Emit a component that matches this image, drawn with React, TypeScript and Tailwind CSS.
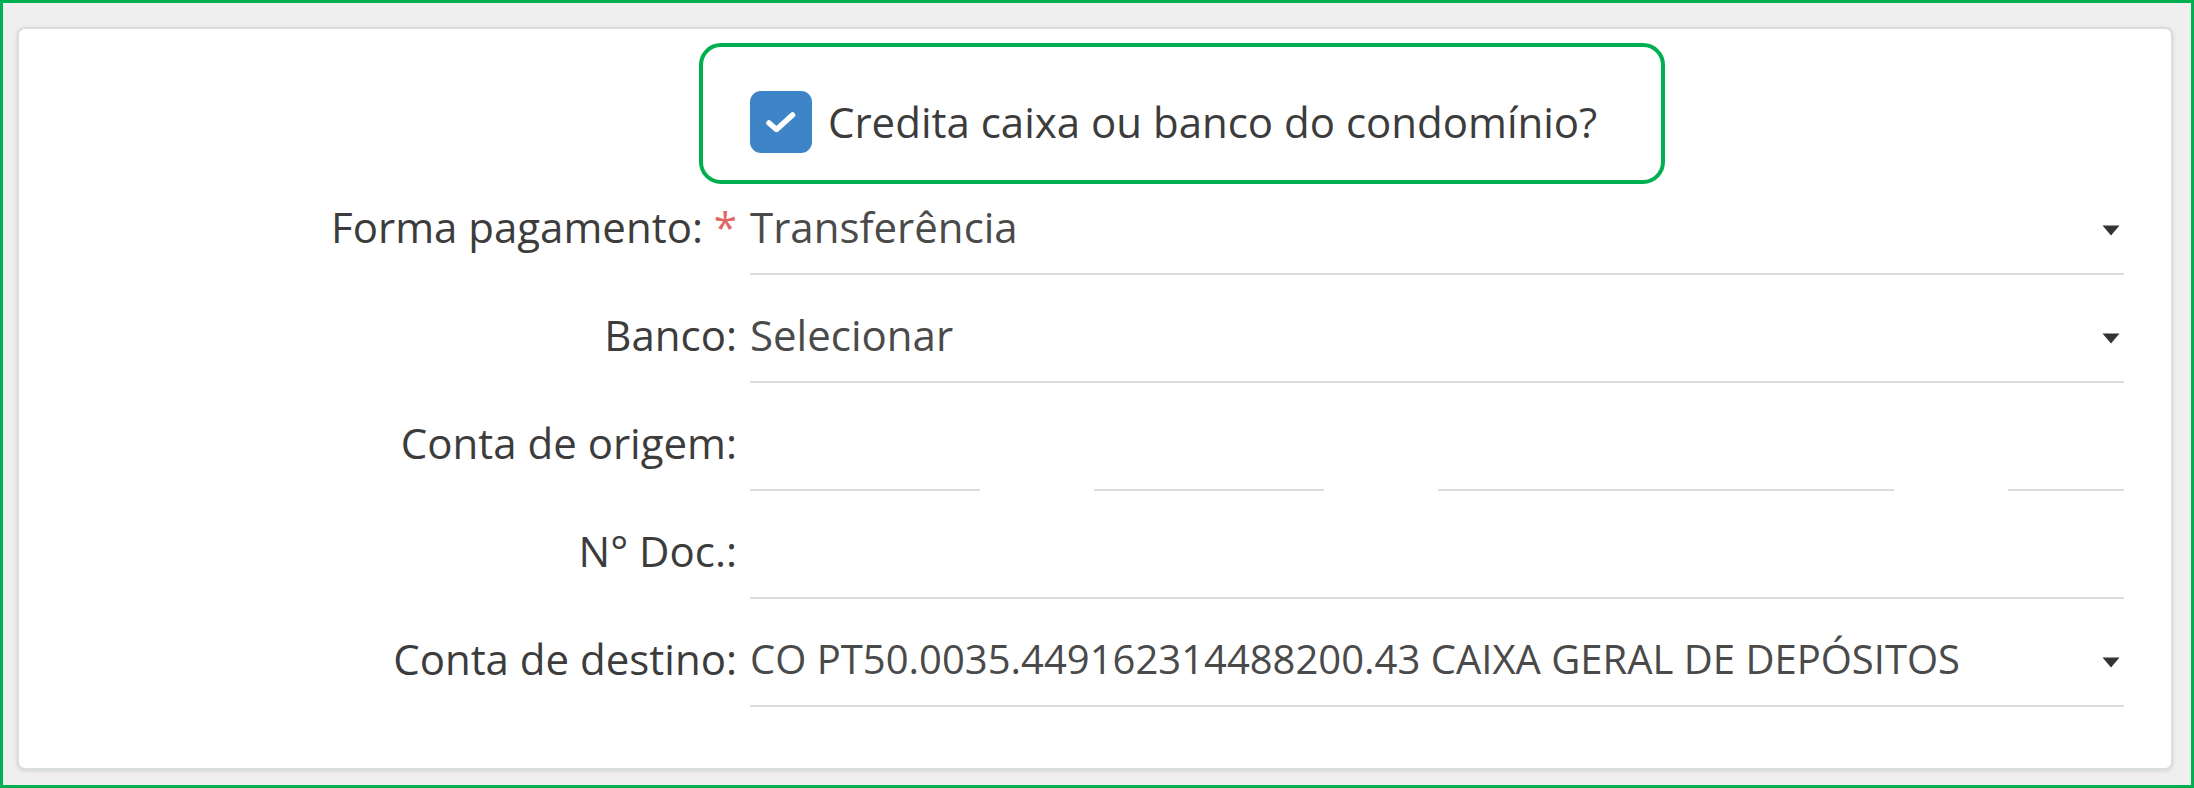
import React from "react";

const font = "font-['Open_Sans',sans-serif]";

function Caret() {
  return (
    <svg width="18" height="11" viewBox="0 0 18 11" className="shrink-0 mt-[6px]">
      <polygon points="0.5,0.5 17.5,0.5 9,10.5" fill="#333" />
    </svg>
  );
}

function Row({
  label,
  required,
  children,
}: {
  label: string;
  required?: boolean;
  children?: React.ReactNode;
}) {
  return (
    <div className="flex items-start">
      <div className="w-[718px] shrink-0 text-right leading-[42px] text-[#3c3c3c]">
        {label}
        {required && <span className="text-[#e06666]"> *</span>}
      </div>
      <div className="ml-[13px] flex-1">{children}</div>
    </div>
  );
}

function Select({ value, small }: { value?: string; small?: boolean }) {
  return (
    <div className="flex items-center justify-between border-b-2 border-[#dcdcdc] pb-[25px] pr-[4px]">
      <span
        className={`leading-[42px] h-[42px] text-[#4a4a4a] whitespace-nowrap ${small ? "text-[40px]" : ""}`}
      >
        {value}
      </span>
      <Caret />
    </div>
  );
}

export default function App() {
  return (
    <div className={`w-[2194px] h-[788px] overflow-hidden border-[3px] border-[#00b050] bg-[#efefef] pt-[24px] pl-[14px] pr-[18px] pb-[15px] ${font} text-[42px]`}>
      <div className="h-full rounded-lg border-2 border-[#d9dee1] bg-white shadow-[0_1px_4px_rgba(0,0,0,0.12)] pt-[14px] pr-[47px]">
        <div className="ml-[680px] w-[966px] h-[141px] rounded-[22px] border-4 border-[#00b050] flex items-center pt-[16px] pl-[47px]">
          <div className="w-[62px] h-[62px] rounded-[11px] bg-[#3d85c6] flex items-center justify-center shrink-0">
            <svg width="34" height="24" viewBox="0 0 34 24">
              <path d="M5 13 L12.5 19.5 L28.5 5" stroke="white" strokeWidth="5.5" fill="none" strokeLinecap="round" strokeLinejoin="round" />
            </svg>
          </div>
          <span className="ml-[16px] text-[#3c3c3c] whitespace-nowrap">Credita caixa ou banco do condomínio?</span>
        </div>

        <div className="mt-[22px] flex flex-col gap-[39px]">
          <Row label="Forma pagamento:" required>
            <Select value="Transferência" />
          </Row>
          <Row label="Banco:">
            <Select value="Selecionar" />
          </Row>
          <Row label="Conta de origem:">
            <div className="flex gap-[114px] pt-[67px]">
              <div className="w-[230px] border-b-2 border-[#dcdcdc]" />
              <div className="w-[230px] border-b-2 border-[#dcdcdc]" />
              <div className="w-[456px] border-b-2 border-[#dcdcdc]" />
              <div className="flex-1 border-b-2 border-[#dcdcdc]" />
            </div>
          </Row>
          <Row label="N° Doc.:">
            <div className="h-[67px] border-b-2 border-[#dcdcdc] box-content" />
          </Row>
          <Row label="Conta de destino:">
            <Select small value="CO PT50.0035.449162314488200.43 CAIXA GERAL DE DEPÓSITOS" />
          </Row>
        </div>
      </div>
    </div>
  );
}
